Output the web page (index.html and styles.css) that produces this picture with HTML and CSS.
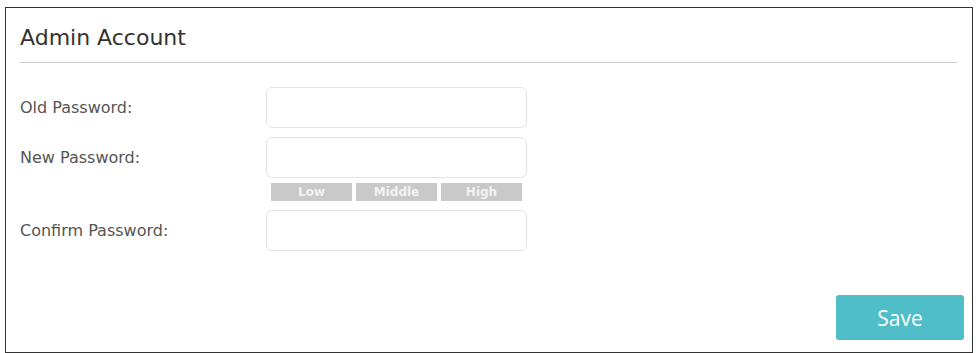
FILE: index.html
```html
<!DOCTYPE html>
<html lang="en">

<head>
    <meta charset="UTF-8">
    <meta name="viewport" content="width=device-width, initial-scale=1.0">
    <title>Admin Account</title>
    <link rel="stylesheet" href="styles.css">
</head>

<body>
    <div class="panel">
        <h2 class="panel-title">Admin Account</h2>
        <div class="form">
            <div class="row">
                <label class="label">Old Password:</label>
                <input class="text-input" type="password">
            </div>
            <div class="row">
                <label class="label">New Password:</label>
                <div class="field">
                    <input class="text-input" type="password">
                    <ul class="strength">
                        <li>Low</li>
                        <li>Middle</li>
                        <li>High</li>
                    </ul>
                </div>
            </div>
            <div class="row">
                <label class="label">Confirm Password:</label>
                <input class="text-input" type="password">
            </div>
        </div>
        <div class="actions">
            <button class="btn-save">Save</button>
        </div>
    </div>
</body>

</html>
```

FILE: styles.css
```css
* {
    margin: 0;
    padding: 0;
    box-sizing: border-box;
}

li {
    list-style: none;
}

body {
    font-family: "DejaVu Sans", "Liberation Sans", sans-serif;
    background: #fff;
    color: #555;
}

.panel {
    width: 968px;
    height: 346px;
    margin: 7px 0 0 5px;
    border: 1px solid #333;
    display: flex;
    flex-direction: column;
}

.panel-title {
    margin: 0 15px 0 14px;
    padding-top: 17px;
    height: 55px;
    font-size: 22px;
    font-weight: normal;
    color: #333;
    border-bottom: 1px solid #ccc;
}

.form {
    padding: 24px 0 0 14px;
    display: flex;
    flex-direction: column;
    gap: 9px;
}

.row {
    display: flex;
    align-items: flex-start;
}

.label {
    width: 246px;
    height: 41px;
    line-height: 42px;
    font-size: 16px;
    color: #555;
}

.field {
    display: flex;
    flex-direction: column;
    gap: 5px;
}

.text-input {
    width: 261px;
    height: 41px;
    border: 1px solid #e3e3e3;
    border-radius: 6px;
    outline: none;
}

.strength {
    display: flex;
    gap: 4px;
    padding-left: 5px;
}

.strength li {
    width: 81px;
    height: 18px;
    line-height: 18px;
    background-color: #c9c9c9;
    color: #f2f2f2;
    font-size: 12px;
    font-weight: bold;
    text-align: center;
}

.actions {
    margin-top: auto;
    display: flex;
    justify-content: flex-end;
    padding: 0 8px 12px 0;
}

.btn-save {
    width: 128px;
    height: 45px;
    border: none;
    border-radius: 3px;
    background-color: #4fbec9;
    color: #fff;
    font-family: "Open Sans", "Noto Sans", sans-serif;
    font-size: 21px;
    cursor: pointer;
}
```
